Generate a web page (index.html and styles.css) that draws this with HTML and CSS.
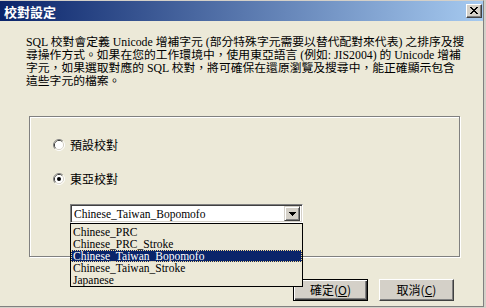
FILE: index.html
```html
<!DOCTYPE html>
<html>
<head>
<meta charset="utf-8">
<link rel="stylesheet" href="styles.css">
</head>
<body>
<div class="window">
  <div class="titlebar">
    <span class="title">校對設定</span>
    <span class="close">
      <svg width="8" height="7" viewBox="0 0 8 7" shape-rendering="crispEdges"><path fill="#000" d="M0 0h2v1h-2z M6 0h2v1h-2z M1 1h2v1h-2z M5 1h2v1h-2z M2 2h4v1h-4z M3 3h2v1h-2z M2 4h4v1h-4z M1 5h2v1h-2z M5 5h2v1h-2z M0 6h2v1h-2z M6 6h2v1h-2z"/></svg>
    </span>
  </div>
  <div class="content">
    <p class="desc">SQL 校對會定義 Unicode 增補字元 (部分特殊字元需要以替代配對來代表) 之排序及搜<br>尋操作方式。如果在您的工作環境中，使用東亞語言 (例如: JIS2004) 的 Unicode 增補<br>字元，如果選取對應的 SQL 校對，將可確保在還原瀏覽及搜尋中，能正確顯示包含<br>這些字元的檔案。</p>
    <div class="group">
      <div class="radio">
        <svg width="12" height="12" viewBox="0 0 12 12"><path d="M2.11 9.89A5.5 5.5 0 0 1 9.89 2.11" stroke="#808080" fill="none"/><path d="M9.89 2.11A5.5 5.5 0 0 1 2.11 9.89" stroke="#fff" fill="none"/><path d="M2.82 9.18A4.5 4.5 0 0 1 9.18 2.82" stroke="#404040" fill="none"/><path d="M9.18 2.82A4.5 4.5 0 0 1 2.82 9.18" stroke="#D4D0C8" fill="none"/><circle cx="6" cy="6" r="4" fill="#fff"/></svg>
        <span>預設校對</span>
      </div>
      <div class="radio second">
        <svg width="12" height="12" viewBox="0 0 12 12"><path d="M2.11 9.89A5.5 5.5 0 0 1 9.89 2.11" stroke="#808080" fill="none"/><path d="M9.89 2.11A5.5 5.5 0 0 1 2.11 9.89" stroke="#fff" fill="none"/><path d="M2.82 9.18A4.5 4.5 0 0 1 9.18 2.82" stroke="#404040" fill="none"/><path d="M9.18 2.82A4.5 4.5 0 0 1 2.82 9.18" stroke="#D4D0C8" fill="none"/><circle cx="6" cy="6" r="4" fill="#fff"/><circle cx="6" cy="6" r="2" fill="#000"/></svg>
        <span>東亞校對</span>
      </div>
      <div class="combo">
        <div class="combo-field">
          <span class="combo-text">Chinese_Taiwan_Bopomofo</span>
          <span class="combo-btn"><svg width="7" height="4" viewBox="0 0 7 4" shape-rendering="crispEdges"><path fill="#000" d="M0 0h7v1h-7z M1 1h5v1h-5z M2 2h3v1h-3z M3 3h1v1h-1z"/></svg></span>
        </div>
        <ul class="listbox">
          <li>Chinese_PRC</li>
          <li>Chinese_PRC_Stroke</li>
          <li class="selected">Chinese_Taiwan_Bopomofo</li>
          <li>Chinese_Taiwan_Stroke</li>
          <li>Japanese</li>
        </ul>
      </div>
    </div>
    <div class="buttons">
      <span class="btn default"><span class="btn-inner">確定(<u>O</u>)</span></span>
      <span class="btn"><span class="btn-inner">取消(<u>C</u>)</span></span>
    </div>
  </div>
</div>
</body>
</html>
```
FILE: styles.css
```css
html, body {
  margin: 0;
  padding: 0;
}
body {
  width: 486px;
  height: 308px;
  overflow: hidden;
  background: #D4D0C8;
  font-family: "Liberation Serif", "Noto Sans CJK TC", serif;
  font-size: 12px;
  color: #000;
}
.window {
  width: 484px;
  height: 307px;
  box-sizing: border-box;
  background: #ECE9D8;
  border-top: 1px solid #D4D0C8;
  border-right: 1px solid #808080;
  border-bottom: 1px solid #808080;
  display: flex;
  flex-direction: column;
}
.titlebar {
  height: 20px;
  background: linear-gradient(to right, #0A246A, #A6CAF0);
  display: flex;
  align-items: center;
  justify-content: space-between;
  padding: 0 1px 0 4px;
}
.title {
  color: #fff;
  font-family: "Noto Sans CJK TC", sans-serif;
  font-weight: bold;
  font-size: 13px;
  line-height: 15px;
}
.close {
  width: 16px;
  height: 14px;
  box-sizing: border-box;
  background: #D4D0C8;
  border-top: 1px solid #fff;
  border-left: 1px solid #fff;
  border-right: 1px solid #404040;
  border-bottom: 1px solid #404040;
  box-shadow: inset -1px -1px 0 #808080;
  display: flex;
  align-items: center;
  justify-content: center;
  padding: 0 1px 1px 0;
}
.close svg { display: block; }
.content {
  display: flex;
  flex-direction: column;
}
.desc {
  margin: 15px 0 0 26px;
  font-size: 11.8px;
  line-height: 13px;
  white-space: nowrap;
}
.group {
  margin: 28px 0 0 29px;
  width: 431px;
  height: 141px;
  box-sizing: border-box;
  border: 1px solid #808080;
  box-shadow: inset 1px 1px 0 #fff, 1px 1px 0 #fff;
  padding: 22px 0 0 23px;
  display: flex;
  flex-direction: column;
}
.radio {
  display: flex;
  align-items: center;
  gap: 5px;
  height: 12px;
  font-family: "Noto Sans CJK TC", sans-serif;
  line-height: 12px;
}
.radio svg { display: block; flex: none; }
.radio.second { margin-top: 22px; }
.combo {
  position: relative;
  margin: 19px 0 0 17px;
  width: 233px;
}
.combo-field {
  height: 19px;
  box-sizing: border-box;
  background: #fff;
  border-top: 1px solid #808080;
  border-left: 1px solid #808080;
  border-right: 1px solid #fff;
  border-bottom: 1px solid #fff;
  box-shadow: inset 1px 1px 0 #404040, inset -1px -1px 0 #D4D0C8;
  display: flex;
  align-items: center;
  justify-content: space-between;
  padding: 1px 2px 1px 2px;
}
.combo-text {
  font-size: 11.5px;
  line-height: 14px;
  padding-left: 1px;
}
.combo-btn {
  width: 16px;
  height: 15px;
  box-sizing: border-box;
  background: #D4D0C8;
  border-top: 1px solid #D4D0C8;
  border-left: 1px solid #D4D0C8;
  border-right: 1px solid #404040;
  border-bottom: 1px solid #404040;
  box-shadow: inset 1px 1px 0 #fff, inset -1px -1px 0 #808080;
  display: flex;
  align-items: center;
  justify-content: center;
}
.combo-btn svg { display: block; }
.listbox {
  position: absolute;
  left: 0;
  top: 19px;
  width: 233px;
  box-sizing: border-box;
  margin: 0;
  padding: 2px 0 0 0;
  height: 64px;
  list-style: none;
  background: #ECE9D8;
  border: 1px solid #000;
  z-index: 5;
  font-size: 11.5px;
}
.listbox li {
  height: 12px;
  line-height: 12px;
  padding-left: 2px;
  white-space: nowrap;
}
.listbox li.selected {
  background: #0A246A;
  color: #fff;
  outline: 1px dotted #F5D990;
  outline-offset: -1px;
}
.buttons {
  display: flex;
  gap: 11px;
  margin: 22px 0 0 293px;
}
.btn {
  width: 75px;
  height: 22px;
  box-sizing: border-box;
  background: #D4D0C8;
  border-top: 1px solid #fff;
  border-left: 1px solid #fff;
  border-right: 1px solid #404040;
  border-bottom: 1px solid #404040;
  box-shadow: inset -1px -1px 0 #808080;
  display: flex;
  align-items: center;
  justify-content: center;
}
.btn.default {
  border: 1px solid #000;
  box-shadow: inset 1px 1px 0 #fff, inset -1px -1px 0 #404040, inset -2px -2px 0 #808080;
}
.btn-inner {
  font-family: "Noto Sans CJK TC", sans-serif;
  line-height: 14px;
}
.btn-inner u {
  text-decoration: underline;
}
```
